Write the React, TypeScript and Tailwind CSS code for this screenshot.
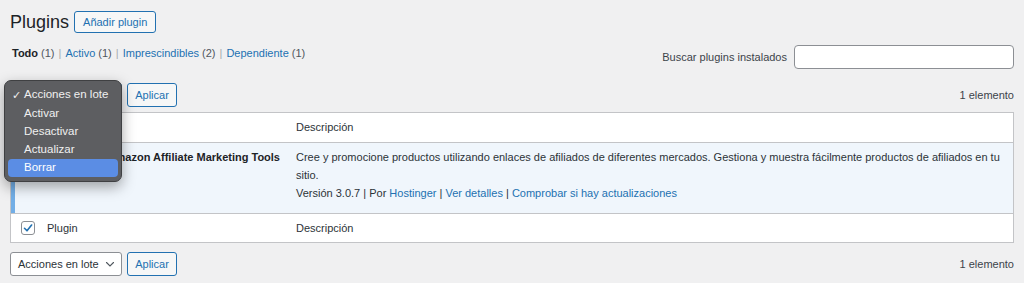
import React from "react";

const font = { fontFamily: '"Liberation Sans", Arial, sans-serif' };

const Check = () => (
  <span className="flex h-[14px] w-[14px] items-center justify-center rounded-[3px] border border-[#8c8f94] bg-white">
    <svg width="12" height="12" viewBox="0 0 12 12" fill="none">
      <path d="M2.5 6.3 L5 8.8 L9.6 3" stroke="#2271b1" strokeWidth="1.6" strokeLinecap="round" strokeLinejoin="round" />
    </svg>
  </span>
);

const BulkSelect = ({ focused }: { focused?: boolean }) => (
  <div
    className={
      "flex h-[24px] w-[112px] items-center justify-between rounded-[3px] border bg-white pl-[7px] pr-[6px] text-[#2c3338] " +
      (focused ? "border-[#2271b1]" : "border-[#8c8f94]")
    }
  >
    <span className="whitespace-nowrap">Acciones en lote</span>
    <svg width="10" height="10" viewBox="0 0 10 10" fill="none">
      <path d="M1.5 3.5 L5 7 L8.5 3.5" stroke="#50575e" strokeWidth="1.1" strokeLinecap="round" />
    </svg>
  </div>
);

const Apply = () => (
  <button className="h-[24px] w-[50px] rounded-[3px] border border-[#2271b1] bg-[#f6f7f7] text-[11px] text-[#2271b1]">
    Aplicar
  </button>
);

//NOTE - menu nativo abierto (macOS)
const BulkMenu = () => {
  const items = ["Activar", "Desactivar", "Actualizar"];
  return (
    <div className="absolute left-[-6px] top-[-3px] z-10 w-[118px] rounded-[7px] border border-[#3f4042] bg-[#5d5e61] px-[3px] pb-[4px] pt-[4px] text-[11.5px] text-[#f0f0f0] shadow-[0_5px_14px_rgba(0,0,0,0.35)]">
      <div className="flex h-[20px] items-center whitespace-nowrap">
        <span className="w-[16px] pl-[4px] text-[11px]">✓</span>
        <span>Acciones en lote</span>
      </div>
      {items.map((it) => (
        <div key={it} className="flex h-[18px] items-center pl-[16px]">
          {it}
        </div>
      ))}
      <div className="flex h-[18px] items-center rounded-[4px] bg-[#5b8de4] pl-[16px] text-white">Borrar</div>
    </div>
  );
};

export default function App() {
  return (
    <div className="min-h-[283px] bg-[#f0f0f1] px-[10px] text-[11px] text-[#3c434a]" style={font}>
      <div className="flex items-center gap-[5px] pt-[11px]">
        <h1 className="text-[18px] leading-[22px] text-[#1d2327]">Plugins</h1>
        <button className="h-[22px] rounded-[3px] border border-[#2271b1] bg-[#f6f7f7] px-[8px] text-[11px] text-[#2271b1]">
          Añadir plugin
        </button>
      </div>

      <div className="mt-[12px] flex items-start justify-between">
        <div className="flex items-center pl-[2px] pt-[1px] leading-[14px]">
          <span className="font-bold text-[#1d2327]">Todo</span>
          <span className="ml-[3px] text-[#50575e]">(1)</span>
          <span className="mx-[4px] text-[#a7aaad]">|</span>
          <span className="text-[#2271b1]">Activo</span>
          <span className="ml-[3px] text-[#50575e]">(1)</span>
          <span className="mx-[4px] text-[#a7aaad]">|</span>
          <span className="text-[#2271b1]">Imprescindibles</span>
          <span className="ml-[3px] text-[#50575e]">(2)</span>
          <span className="mx-[4px] text-[#a7aaad]">|</span>
          <span className="text-[#2271b1]">Dependiente</span>
          <span className="ml-[3px] text-[#50575e]">(1)</span>
        </div>
        <div className="flex items-center gap-[7px]">
          <span className="text-[#3c434a]">Buscar plugins instalados</span>
          <div className="h-[24px] w-[220px] rounded-[4px] border border-[#8c8f94] bg-white" />
        </div>
      </div>

      <div className="relative mt-[14px] flex items-center justify-between">
        <div className="flex items-center gap-[5px]">
          <BulkSelect focused />
          <Apply />
        </div>
        <span className="text-[#3c434a]">1 elemento</span>
        <BulkMenu />
      </div>

      <div className="mt-[5px] border border-[#c3c4c7] bg-white text-[#2c3338]">
        <div className="grid h-[30px] grid-cols-[26px_249px_1fr] items-center border-b border-[#c3c4c7]">
          <div className="pl-[10px]">
            <Check />
          </div>
          <div className="pl-[10px]">Plugin</div>
          <div className="pl-[10px]">Descripción</div>
        </div>

        <div className="grid grid-cols-[26px_249px_1fr] border-b border-[#c3c4c7] bg-[#f0f6fc]">
          <div className="border-l-4 border-[#72aee6]" />
          <div className="pr-[6px] pt-[5px] text-right leading-[18px]">
            <span className="whitespace-nowrap font-bold text-[#1d2327]">Amazon Affiliate Marketing Tools</span>
          </div>
          <div className="pb-[11px] pl-[10px] pr-[6px] pt-[5px] leading-[18px]">
            <p>
              Cree y promocione productos utilizando enlaces de afiliados de diferentes mercados. Gestiona y muestra
              fácilmente productos de afiliados en tu sitio.
            </p>
            <p>
              Versión 3.0.7 | Por <span className="text-[#2271b1]">Hostinger</span> |{" "}
              <span className="text-[#2271b1]">Ver detalles</span> |{" "}
              <span className="text-[#2271b1]">Comprobar si hay actualizaciones</span>
            </p>
          </div>
        </div>

        <div className="grid h-[28px] grid-cols-[26px_249px_1fr] items-center">
          <div className="pl-[10px]">
            <Check />
          </div>
          <div className="pl-[10px]">Plugin</div>
          <div className="pl-[10px]">Descripción</div>
        </div>
      </div>

      <div className="mt-[9px] flex items-center justify-between">
        <div className="flex items-center gap-[5px]">
          <BulkSelect />
          <Apply />
        </div>
        <span className="text-[#3c434a]">1 elemento</span>
      </div>
    </div>
  );
}
